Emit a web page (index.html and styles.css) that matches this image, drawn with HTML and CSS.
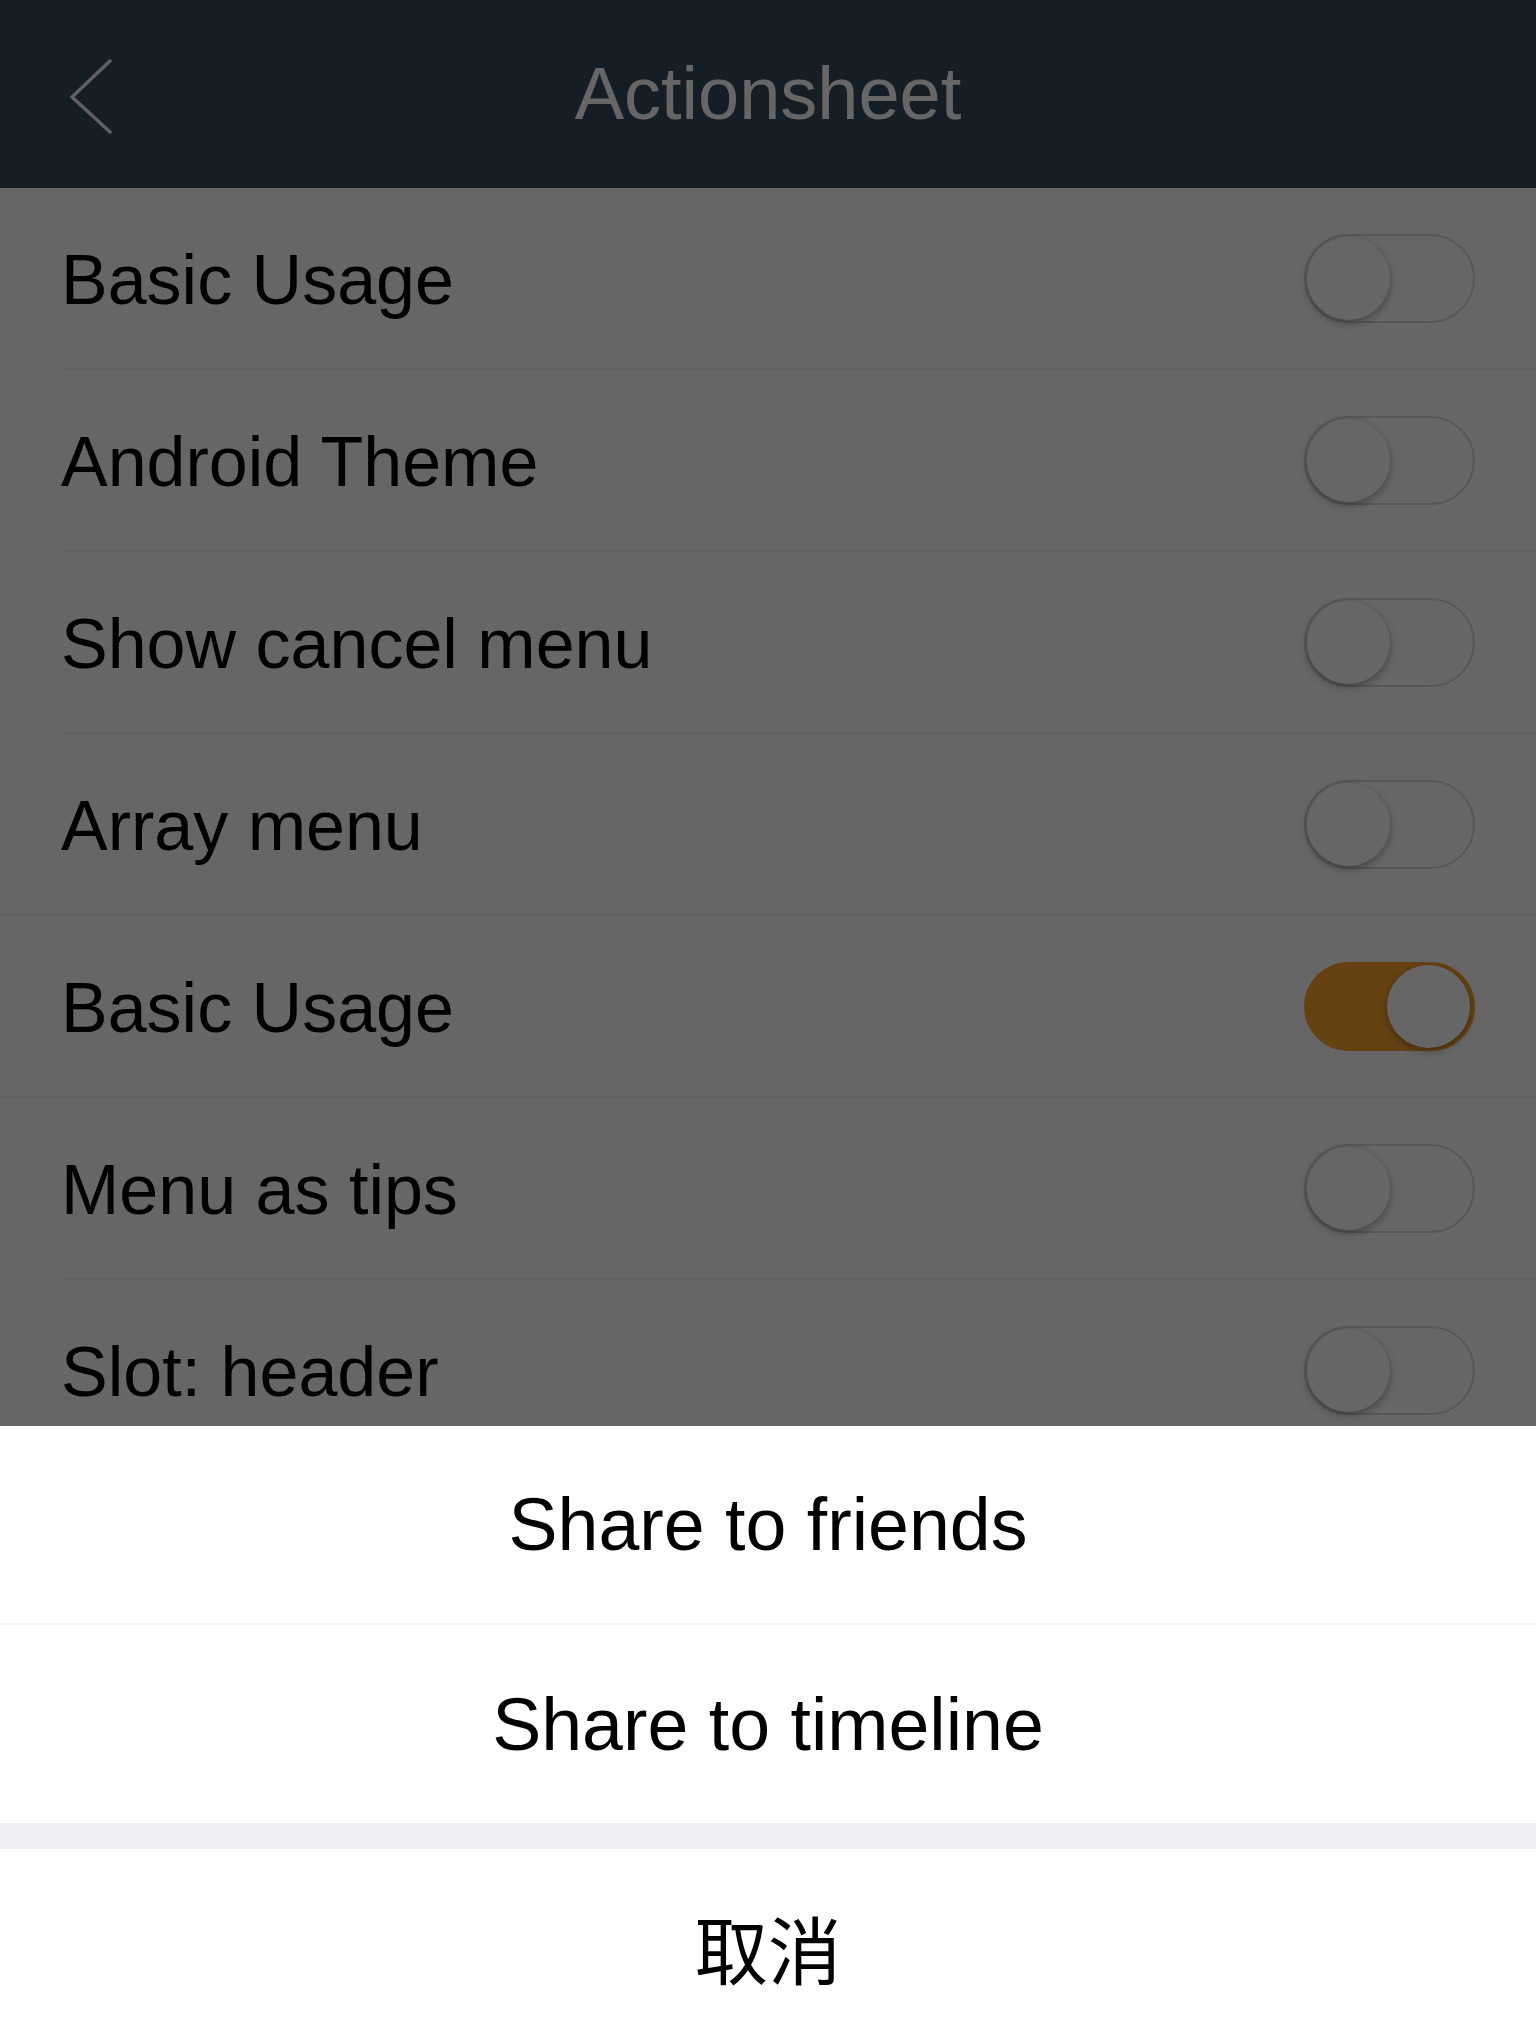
FILE: index.html
```html
<!DOCTYPE html>
<html lang="en">
<head>
<meta charset="utf-8">
<title>Actionsheet</title>
<link rel="stylesheet" href="styles.css">
</head>
<body>
<div class="page">
  <header class="nav">
    <svg class="back" viewBox="0 0 48 80" width="48" height="80" aria-hidden="true">
      <polyline points="44,7 6,43 44,78" fill="none" stroke="#f0f0f0" stroke-width="3.5" stroke-linecap="round" stroke-linejoin="round"/>
    </svg>
    <h1 class="title">Actionsheet</h1>
    <span class="nav-spacer"></span>
  </header>

  <div class="group">
    <div class="cell"><span class="label">Basic Usage</span><span class="switch"><span class="knob"></span></span></div>
    <div class="cell"><span class="label">Android Theme</span><span class="switch"><span class="knob"></span></span></div>
    <div class="cell"><span class="label">Show cancel menu</span><span class="switch"><span class="knob"></span></span></div>
    <div class="cell"><span class="label">Array menu</span><span class="switch"><span class="knob"></span></span></div>
  </div>
  <div class="group">
    <div class="cell"><span class="label">Basic Usage</span><span class="switch on"><span class="knob"></span></span></div>
  </div>
  <div class="group">
    <div class="cell"><span class="label">Menu as tips</span><span class="switch"><span class="knob"></span></span></div>
    <div class="cell"><span class="label">Slot: header</span><span class="switch"><span class="knob"></span></span></div>
  </div>
</div>

<div class="mask"></div>

<div class="sheet">
  <div class="sheet-menu">
    <div class="sheet-cell">Share to friends</div>
    <div class="sheet-cell">Share to timeline</div>
  </div>
  <div class="sheet-action">
    <div class="sheet-cell cancel">取消</div>
  </div>
</div>
</body>
</html>
```

FILE: styles.css
```css
html, body {
  margin: 0;
  padding: 0;
}

body {
  width: 1536px;
  height: 2044px;
  overflow: hidden;
  background: #fbf9fe;
  font-family: "Liberation Sans", Arial, "Noto Sans CJK SC", sans-serif;
  color: #000;
}

.page {
  width: 100%;
}

.nav {
  height: 188px;
  background: #35495e;
  display: grid;
  grid-template-columns: 1fr auto 1fr;
  align-items: center;
}

.back {
  display: block;
  margin-left: 66px;
}

.title {
  margin: 0;
  font-size: 74px;
  font-weight: normal;
  color: #ffffff;
  line-height: 1;
}

.group {
  background: #ffffff;
  border-bottom: 2px solid #f2f2f2;
}

.cell {
  height: 180px;
  margin-left: 61px;
  padding-right: 61px;
  display: flex;
  align-items: center;
  justify-content: space-between;
  border-bottom: 2px solid #f2f2f2;
}

.cell:last-child {
  border-bottom: none;
}

.label {
  font-size: 70px;
  line-height: 1.15;
  padding-top: 5px;
  color: #000;
}

.switch {
  box-sizing: border-box;
  width: 171px;
  height: 89px;
  border: 2px solid #dadada;
  border-radius: 45px;
  background: #ffffff;
  display: flex;
  align-items: center;
  justify-content: flex-start;
  padding: 0 1px;
}

.switch.on {
  background: #ffa62e;
  border-color: #ffa62e;
  justify-content: flex-end;
  padding: 0 3px;
}

.knob {
  width: 83px;
  height: 83px;
  border-radius: 50%;
  background: #ffffff;
  box-shadow: 0 3px 8px rgba(0, 0, 0, 0.35);
}

.mask {
  position: fixed;
  inset: 0;
  background: rgba(0, 0, 0, 0.6);
  z-index: 10;
}

.sheet {
  position: fixed;
  left: 0;
  right: 0;
  bottom: 0;
  z-index: 20;
  background: #efeff4;
  text-align: center;
}

.sheet-menu {
  background: #ffffff;
}

.sheet-cell {
  height: 197px;
  display: flex;
  align-items: center;
  justify-content: center;
  font-size: 73.5px;
  color: #000;
  background: #ffffff;
}

.sheet-cell + .sheet-cell {
  height: 198px;
  border-top: 2px solid #f4f4f4;
}

.sheet-action {
  margin-top: 26px;
}

.sheet-cell.cancel {
  height: 195px;
  font-family: "Noto Sans CJK SC", "Liberation Sans", sans-serif;
}
```
